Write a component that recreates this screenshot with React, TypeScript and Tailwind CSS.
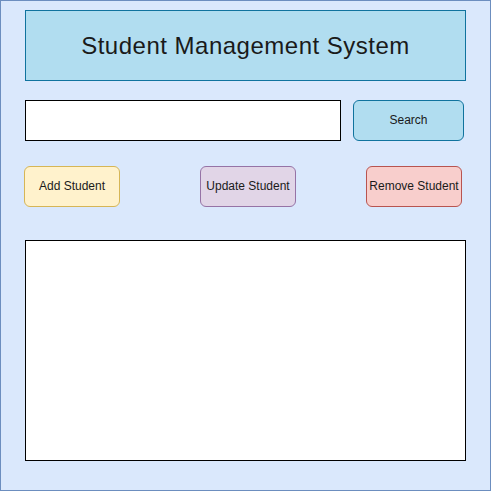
export default function App() {
  return (
    <div
      className="w-[491px] h-[491px] bg-[#dae8fc] border border-[#6c8ebf] flex flex-col text-black"
      style={{ fontFamily: '"Liberation Sans", Arial, sans-serif' }}
    >
      <div className="ml-[24px] mt-[9px] w-[441px] h-[71px] bg-[#b1ddf0] border border-[#10739e] flex items-center justify-center text-[24px] tracking-[0.5px] leading-none text-[#1a1a1a]">
        Student Management System
      </div>
      <div className="ml-[24px] mt-[19px] flex items-center">
        <div className="w-[316px] h-[41px] bg-white border border-black" />
        <button className="ml-[12px] w-[111px] h-[41px] rounded-[6px] bg-[#b1ddf0] border border-[#10739e] text-[12px] text-[#1a1a1a] pb-[2px]">
          Search
        </button>
      </div>
      <div className="mt-[25px] flex items-center">
        <button className="ml-[23px] w-[96px] h-[41px] rounded-[6px] bg-[#fff2cc] border border-[#d6b656] text-[12px] text-[#1a1a1a] pb-[2px]">
          Add Student
        </button>
        <button className="ml-[80px] w-[96px] h-[41px] rounded-[6px] bg-[#e1d5e7] border border-[#9673a6] text-[12px] text-[#1a1a1a] pb-[2px]">
          Update Student
        </button>
        <button className="ml-[70px] w-[96px] h-[41px] rounded-[6px] bg-[#f8cecc] border border-[#b85450] text-[12px] text-[#1a1a1a] whitespace-nowrap pb-[2px]">
          Remove Student
        </button>
      </div>
      <div className="ml-[24px] mt-[33px] w-[441px] h-[221px] bg-white border border-black" />
    </div>
  );
}
